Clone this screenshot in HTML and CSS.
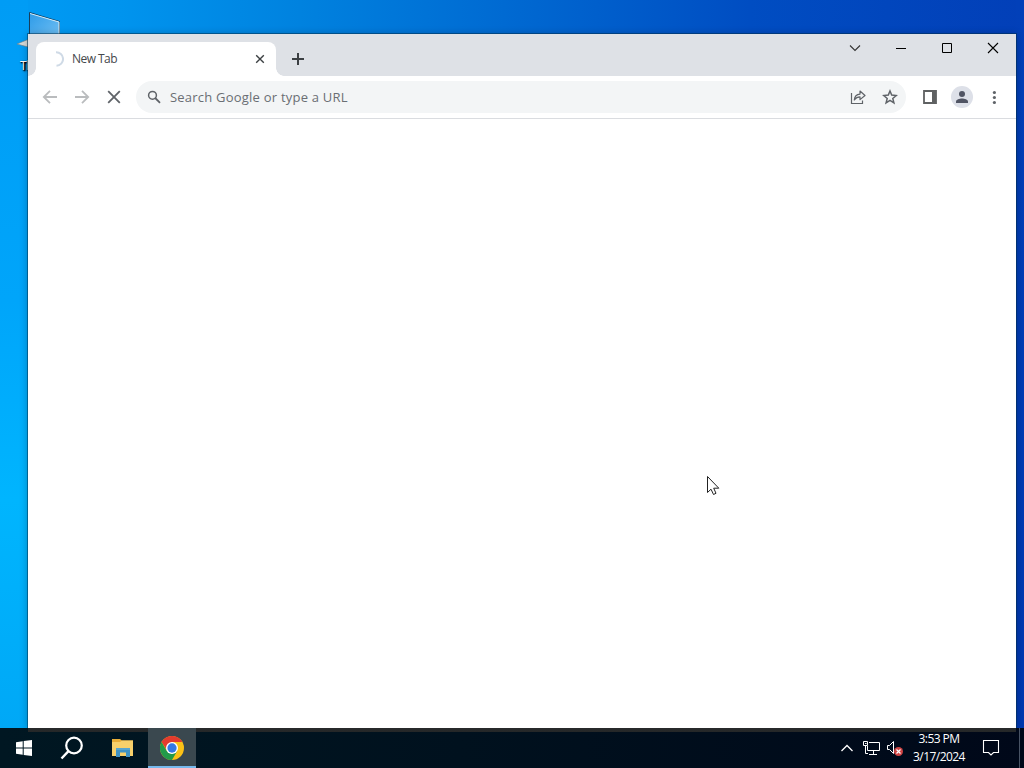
FILE: index.html
```html
<!DOCTYPE html>
<html lang="en">
<head>
  <meta charset="UTF-8">
  <title>New Tab</title>
  <link rel="stylesheet" href="styles.css">
</head>
<body>

  <div class="desktop">
    <div class="shortcut">
      <svg width="44" height="50" viewBox="0 0 44 50">
        <defs>
          <linearGradient id="glass" x1="0" y1="0" x2="1" y2="1">
            <stop offset="0" stop-color="#2d9be8"/>
            <stop offset="1" stop-color="#78c3f4"/>
          </linearGradient>
        </defs>
        <path d="M12.5 1.5L42.500 10.500V34H12.500Z" fill="url(#glass)" stroke="#173e5c"/>
        <path d="M13 2.500L42 11V24" fill="none" stroke="#d5edf8"/>
        <path d="M0 33L11 28.500V36Z" fill="#d8dcda" stroke="#6f7f86" stroke-width=".6"/>
      </svg>
      <span>This PC</span>
    </div>

    <div class="window">
      <div class="titlebar">
        <div class="tab">
          <svg class="spinner" width="16" height="16" viewBox="0 0 16 16"><path d="M8 1.200A6.800 6.800 0 0 1 8.500 14.800" fill="none" stroke="#cfdae6" stroke-width="2"/></svg>
          <span class="tab-title">New Tab</span>
          <svg width="16" height="16" viewBox="0 0 16 16"><path d="M4.200 4.200L11.800 11.800M11.800 4.200L4.200 11.800" stroke="#3c4043" stroke-width="1.400"/></svg>
        </div>
        <svg class="new-tab" width="16" height="16" viewBox="0 0 16 16"><path d="M8 2V14M2 8H14" stroke="#3c4043" stroke-width="2"/></svg>
        <div class="controls">
          <svg width="46" height="28" viewBox="0 0 46 28"><path d="M18 11.500L23 16.500L28 11.500" fill="none" stroke="#333" stroke-width="1.100"/></svg>
          <svg width="46" height="28" viewBox="0 0 46 28"><path d="M18 14.500H28" stroke="#000"/></svg>
          <svg width="46" height="28" viewBox="0 0 46 28"><path d="M18.500 9.500H27.500V18.500H18.500Z" fill="none" stroke="#000"/></svg>
          <svg width="46" height="28" viewBox="0 0 46 28"><path d="M18 9L28 19M28 9L18 19" stroke="#000" stroke-width="1.100"/></svg>
        </div>
      </div>

      <div class="toolbar">
        <svg width="16" height="16" viewBox="0 0 16 16"><path d="M15 8H2M8 1.800L1.800 8L8 14.200" fill="none" stroke="#babcbe" stroke-width="1.800"/></svg>
        <svg width="16" height="16" viewBox="0 0 16 16"><path d="M1 8H14M8 1.800L14.200 8L8 14.200" fill="none" stroke="#babcbe" stroke-width="1.800"/></svg>
        <svg width="16" height="16" viewBox="0 0 16 16"><path d="M2.200 2.200L13.800 13.800M13.800 2.200L2.200 13.800" stroke="#5f6368" stroke-width="1.800"/></svg>
        <div class="omnibox">
          <svg width="16" height="16" viewBox="0 0 16 16"><circle cx="6.500" cy="6.300" r="3.900" fill="none" stroke="#5f6368" stroke-width="1.500"/><path d="M9.200 9L14 13.800" stroke="#5f6368" stroke-width="1.800"/></svg>
          <span class="placeholder">Search Google or type a URL</span>
          <svg width="16" height="16" viewBox="0 0 16 16"><path d="M1.500 4V14.500H12.500V11.500" fill="none" stroke="#5f6368" stroke-width="1.200"/><path d="M4.300 11C4.600 7.400 6.500 5.400 10 5.100V2L15 6.500L10 10.600V7.800C7.500 7.800 5.800 8.800 4.300 11Z" fill="none" stroke="#5f6368" stroke-width="1.200" stroke-linejoin="round"/></svg>
          <svg width="16" height="16" viewBox="0 0 16 16"><path d="M8 2L9.700 6.100L14.200 6.500L10.800 9.400L11.900 13.800L8 11.400L4.100 13.800L5.200 9.400L1.800 6.500L6.300 6.100Z" fill="none" stroke="#5f6368" stroke-width="1.500"/></svg>
        </div>
        <svg width="16" height="16" viewBox="0 0 16 16"><path d="M2 2H14V14H2Z" fill="none" stroke="#5f6162" stroke-width="1.800"/><path d="M10 2H14V14H10Z" fill="#5f6162"/></svg>
        <div class="avatar">
          <svg width="16" height="16" viewBox="0 0 16 16"><circle cx="8" cy="5" r="3" fill="#505463"/><path d="M2 14V12.500C2 10.400 5.500 9.400 8 9.400S14 10.400 14 12.500V14Z" fill="#505463"/></svg>
        </div>
        <svg width="16" height="16" viewBox="0 0 16 16"><g fill="#5f6368"><circle cx="8.400" cy="3.500" r="1.600"/><circle cx="8.400" cy="8.500" r="1.600"/><circle cx="8.400" cy="13.500" r="1.600"/></g></svg>
      </div>
      <div class="page"></div>
    </div>

    <svg class="cursor" width="14" height="21" viewBox="0 0 14 21"><path d="M1.500 1.500V17.500L5 14.200L7.500 19.500L10 18.300L7.700 13.200H12.800Z" fill="#fff" stroke="#222"/></svg>
  </div>

  <div class="taskbar">
    <div class="task">
      <svg width="18" height="18" viewBox="0 0 18 18"><path d="M1 3.300L7.700 2.300V8.500H1ZM8.700 2.100L17 1V8.500H8.700ZM1 9.500H7.700V15.800L1 14.800ZM8.700 9.500H17V17L8.700 15.900Z" fill="#fff"/></svg>
    </div>
    <div class="task">
      <svg width="24" height="24" viewBox="0 0 24 24"><circle cx="14" cy="9.500" r="7.800" fill="none" stroke="#fff" stroke-width="2.200"/><path d="M8.500 15.200L1.500 22.500" stroke="#fff" stroke-width="2.400"/></svg>
    </div>
    <div class="task explorer">
      <svg width="22" height="18" viewBox="0 0 22 18"><path d="M0 0H8L10 1.500H21V17H0Z" fill="#e9ad38"/><path d="M0 3H8L10 1.500H21V17H0Z" fill="#f8d06b"/><path d="M4 9H18V18H14V13.500H8V18H4Z" fill="#3f92c4"/><path d="M4 9H18V11H4Z" fill="#58a5cf"/></svg>
    </div>
    <div class="task active">
      <svg width="24" height="24" viewBox="0 0 48 48">
        <circle cx="24" cy="24" r="24" fill="#fbc116"/>
        <path d="M24 24L14.500 29.500L3.200 12A24 24 0 0 1 44.800 12H24Z" fill="#e33b2e"/>
        <path d="M3.200 12A24 24 0 0 0 24 48L34.400 30L24 36L13.600 30Z" fill="#229a49"/>
        <circle cx="24" cy="24" r="12" fill="#fff"/>
        <circle cx="24" cy="24" r="9.300" fill="#3478e5"/>
      </svg>
    </div>

    <div class="tray">
      <svg width="14" height="16" viewBox="0 0 14 16"><path d="M1.500 11L7 5.500L12.500 11" fill="none" stroke="#fff" stroke-width="1.300"/></svg>
      <svg class="network" width="18" height="16" viewBox="0 0 18 16"><path d="M6 2.500H16.500V10.500H4.500V6M10.500 11V14M6 14.500H14M2.500 5.500V13.500H5M.500 1.500H4.500V5.500H.500ZM2 3.500H3.500" fill="none" stroke="#fff"/></svg>
      <svg class="volume" width="18" height="16" viewBox="0 0 18 16"><path d="M1.500 5.500H3.500L7.500 1.500V13.500L3.500 9.500H1.500Z" fill="none" stroke="#fff"/><circle cx="12.500" cy="11.500" r="4.500" fill="#cf4444"/><path d="M10.500 9.500L14.500 13.500M14.500 9.500L10.500 13.500" stroke="#fff" stroke-width="1.200"/></svg>
      <div class="clock">
        <span>3:53 PM</span>
        <span>3/17/2024</span>
      </div>
      <svg class="notice" width="18" height="18" viewBox="0 0 18 18"><path d="M1.500 1.500H16.500V13.500H11.500L9 16L6.500 13.500H1.500Z" fill="none" stroke="#fff" stroke-width="1.100"/></svg>
      <div class="show-desktop"></div>
    </div>
  </div>

</body>
</html>
```
FILE: styles.css
```css
* {
  box-sizing: border-box;
}
body {
  margin: 0;
  width: 1024px;
  height: 768px;
  overflow: hidden;
  font-family: "Open Sans", "Noto Sans", sans-serif;
  font-size: 12px;
}
svg {
  display: block;
  flex: none;
}
.desktop {
  position: relative;
  height: 728px;
  overflow: hidden;
  background:
    linear-gradient(180deg, #009cf5 0, #00a5fa 300px, #00b5fe 500px, #00a8f6 728px) 0 0 / 28px 100% no-repeat,
    linear-gradient(180deg, #0240b9, #0038b0) 100% 0 / 8px 100% no-repeat,
    linear-gradient(90deg, #009cf5 0, #0094ee 120px, #0082df 300px, #0068d1 520px, #004dc2 750px, #023fb8 1024px);
}
.shortcut {
  position: absolute;
  left: 17px;
  top: 11px;
  width: 50px;
}
.shortcut span {
  display: block;
  margin-top: -3px;
  padding-left: 3px;
  line-height: 16px;
  letter-spacing: -0.5px;
  color: #fff;
  text-shadow: 1px 1px 1px #000, 1px 1px 2px #000, 2px 1px 2px #000;
}
.window {
  position: absolute;
  left: 28px;
  top: 34px;
  width: 988px;
  height: 694px;
  display: flex;
  flex-direction: column;
  background: #fff;
  box-shadow: 0 0 0 1px rgba(0, 45, 75, 0.5), 0 1px 8px rgba(0, 0, 0, 0.3);
}
.titlebar {
  display: flex;
  height: 42px;
  padding-left: 8px;
  background: #dee1e6;
}
.tab {
  position: relative;
  display: flex;
  align-items: center;
  width: 240px;
  height: 34px;
  margin-top: 8px;
  padding: 0 8px 0 12px;
  background: #fff;
  border-radius: 8px 8px 0 0;
}
/* curved feet of the active tab */
.tab::before,
.tab::after {
  content: "";
  position: absolute;
  bottom: 0;
  width: 8px;
  height: 8px;
}
.tab::before {
  left: -8px;
  background: radial-gradient(circle at 0 0, transparent 7.5px, #fff 8px);
}
.tab::after {
  right: -8px;
  background: radial-gradient(circle at 100% 0, transparent 7.5px, #fff 8px);
}
.tab-title {
  flex: 1;
  margin: -1px 0 0 8px;
  letter-spacing: -0.55px;
  color: #45484c;
}
.new-tab {
  margin: 17px 0 0 14px;
}
.controls {
  display: flex;
  margin-left: auto;
}
.toolbar {
  display: flex;
  align-items: center;
  gap: 16px;
  height: 43px;
  padding: 0 14px;
  border-bottom: 1px solid #dadce0;
}
.omnibox {
  display: flex;
  align-items: center;
  width: 770px;
  height: 32px;
  margin-left: -2px;
  padding: 0 8px 0 10px;
  gap: 16px;
  border-radius: 16px;
  background: #f3f5f6;
}
.placeholder {
  flex: 1;
  margin-left: -8px;
  font-size: 13px;
  letter-spacing: 0.22px;
  color: #6a6e73;
}
.avatar {
  display: flex;
  align-items: center;
  justify-content: center;
  width: 22px;
  height: 22px;
  margin: 0 -3px;
  border-radius: 50%;
  background: #dde0e8;
}
.page {
  flex: 1;
}
.cursor {
  position: absolute;
  left: 706px;
  top: 475px;
}
.taskbar {
  display: flex;
  height: 40px;
  color: #fff;
  background:
    linear-gradient(#282a2b, #242728) 28px 0 / 988px 4px no-repeat,
    linear-gradient(90deg, #001722, #00111e 45%, #000819);
}
.task {
  display: flex;
  align-items: center;
  justify-content: center;
  width: 48px;
  height: 40px;
}
.explorer {
  margin-left: 4px;
  width: 46px;
}
.task.active {
  margin-left: 2px;
  padding-top: 2px;
  background: #3a484f;
  border-bottom: 2px solid #76b9ed;
}
.tray {
  display: flex;
  align-items: center;
  margin-left: auto;
}
.network {
  margin-left: 9px;
}
.volume {
  margin-left: 5px;
}
.clock {
  display: flex;
  flex-direction: column;
  align-items: center;
  width: 54px;
  margin-left: 8px;
  line-height: 18px;
  letter-spacing: -0.55px;
  white-space: nowrap;
}
.notice {
  margin-left: 16px;
}
.show-desktop {
  width: 5px;
  height: 40px;
  margin-left: 19px;
  border-left: 1px solid #485364;
}
```
